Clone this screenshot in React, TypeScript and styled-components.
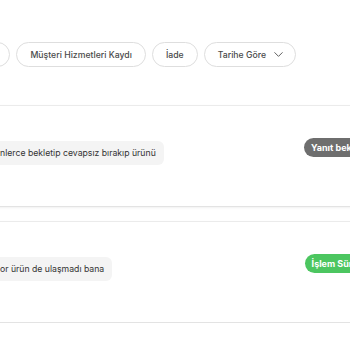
import styled, { createGlobalStyle } from "styled-components";
import { ChevronDown } from "lucide-react";

const GlobalStyle = createGlobalStyle`
  html, body {
    margin: 0;
    padding: 0;
    background: #ffffff;
    overflow: hidden;
  }
  body {
    font-family: Inter, "Noto Sans", "Liberation Sans", sans-serif;
  }
  * {
    box-sizing: border-box;
  }
`;

const Page = styled.div`
  width: 460px;
  margin-left: -41px;
  padding-top: 42px;
`;

const FilterRow = styled.div`
  display: flex;
  align-items: center;
  gap: 6px;
`;

const Chip = styled.button`
  display: flex;
  align-items: center;
  gap: 5px;
  height: 25px;
  padding: 0 13px;
  border: 1px solid #dedede;
  border-radius: 13px;
  background: #ffffff;
  color: #4a4a4a;
  font-family: inherit;
  font-size: 8.7px;
  font-weight: 500;
  white-space: nowrap;
  cursor: pointer;

  svg {
    color: #555555;
    margin-right: -4px;
  }
`;

const List = styled.div`
  display: flex;
  flex-direction: column;
  gap: 14px;
  margin-top: 38px;
`;

const Card = styled.div`
  display: flex;
  align-items: center;
  height: 102px;
  padding: 0 30px 6px 33px;
  border-top: 1px solid #ebebeb;
  border-bottom: 1px solid #e3e3e3;
  box-shadow: 0 1px 2px rgba(0, 0, 0, 0.06);
  background: #ffffff;
`;

const Bubble = styled.div`
  padding: 0 8px;
  height: 24px;
  display: flex;
  align-items: center;
  border-radius: 6px;
  background: #f4f4f4;
  color: #333333;
  font-size: 8.7px;
  white-space: nowrap;
`;

const Status = styled.span<{ $tone: "waiting" | "progress" }>`
  margin-left: auto;
  margin-bottom: 12px;
  height: 19px;
  padding: 0 7px;
  display: flex;
  align-items: center;
  border-radius: 10px;
  background: ${(p) => (p.$tone === "waiting" ? "#6e6e6e" : "#4cc660")};
  color: #ffffff;
  font-size: 9px;
  font-weight: 700;
  white-space: nowrap;
`;

const filters = ["Tümü", "Müşteri Hizmetleri Kaydı", "İade"];

const complaints: { text: string; status: string; tone: "waiting" | "progress" }[] = [
  { text: "nlerce bekletip cevapsız bırakıp ürünü", status: "Yanıt bekleniyor", tone: "waiting" },
  { text: "or ürün de ulaşmadı bana", status: "İşlem Sürecinde", tone: "progress" },
];

export default function App() {
  return (
    <>
      <GlobalStyle />
      <Page>
        <FilterRow>
          {filters.map((f) => (
            <Chip key={f}>{f}</Chip>
          ))}
          <Chip>
            Tarihe Göre
            <ChevronDown size={15} strokeWidth={1.5} />
          </Chip>
        </FilterRow>
        <List>
          {complaints.map((c) => (
            <Card key={c.text}>
              <Bubble>{c.text}</Bubble>
              <Status $tone={c.tone}>{c.status}</Status>
            </Card>
          ))}
        </List>
      </Page>
    </>
  );
}
